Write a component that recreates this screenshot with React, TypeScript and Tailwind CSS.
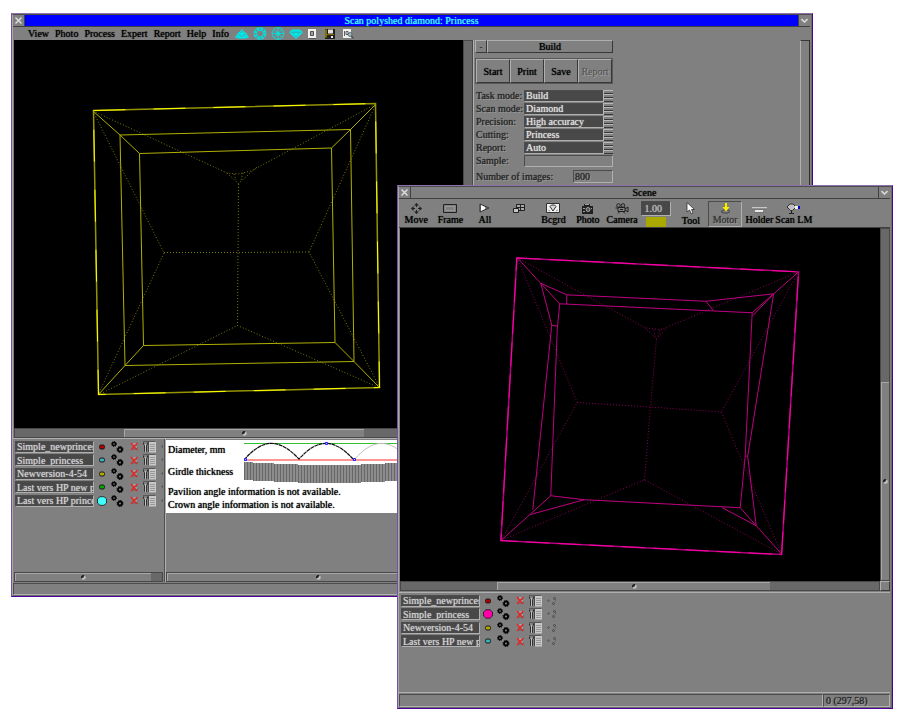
import React, { useState } from 'react';

const inset = 'border border-t-[#4c4c4c] border-l-[#4c4c4c] border-b-[#b0b0b0] border-r-[#b0b0b0]';
const raised = 'border border-t-[#b0b0b0] border-l-[#b0b0b0] border-b-[#383838] border-r-[#383838]';
const heavy = '[text-shadow:0_0_1px_currentColor]';
const emboss = '[text-shadow:0_0_1px_currentColor,1px_1px_0_#a4a4a4]';

type Row = { name: string; color: string; big?: boolean };

const mainRows: Row[] = [
  { name: 'Simple_newprincess', color: '#b00000' },
  { name: 'Simple_princess', color: '#38b0b8' },
  { name: 'Newversion-4-54', color: '#b0a800' },
  { name: 'Last vers HP new princess', color: '#00a800' },
  { name: 'Last vers HP princess', color: '#40ffff', big: true },
];

const sceneRows: Row[] = [
  { name: 'Simple_newprincess', color: '#b00000' },
  { name: 'Simple_princess', color: '#ff00a8', big: true },
  { name: 'Newversion-4-54', color: '#b0a800' },
  { name: 'Last vers HP new princess', color: '#38b0b8' },
];

const settings = [
  { id: 'task', label: 'Task mode:', options: ['Build', 'Scan'] },
  { id: 'scan', label: 'Scan mode:', options: ['Diamond', 'Rough'] },
  { id: 'precision', label: 'Precision:', options: ['High accuracy', 'Normal'] },
  { id: 'cutting', label: 'Cutting:', options: ['Princess', 'Brilliant'] },
  { id: 'report', label: 'Report:', options: ['Auto', 'Manual'] },
];

function Frame({ className, children }: { className: string; children: React.ReactNode }) {
  return (
    <section className={`absolute flex flex-col border border-t-[#8d70ac] border-l-[#7650a8] border-r-[#4b0096] border-b-[#4b0096] bg-[#808080] ${className}`}>
      <div className="flex min-h-0 flex-1 flex-col border border-t-[#4c4c4c] border-l-[#a8a8a8] border-r-[#6c6c6c] border-b-[#6c6c6c] pr-px">
        {children}
      </div>
    </section>
  );
}

function TitleBar({ title, active }: { title: string; active?: boolean }) {
  return (
    <header className="flex h-3 shrink-0 items-stretch border-b border-[#404040]">
      <button aria-label="Close" className="flex w-3 items-center justify-center border-r border-[#404040] bg-[#808080]">
        <svg width="7" height="7" viewBox="0 0 7 7" stroke="#e0e0e0" strokeWidth="1.400" fill="none"><path d="M0.5 0.5l6 6M6.5 0.5l-6 6" /></svg>
      </button>
      <h1 className={`flex flex-1 items-center justify-center leading-3 ${active ? 'bg-[#0000ff] text-[#40ffff]' : 'text-black'}`}>{title}</h1>
      <button aria-label="Collapse" className="flex w-3 items-center justify-center border-l border-[#404040] bg-[#808080]">
        <svg width="7" height="5" viewBox="0 0 7 5" stroke="#d8d8d8" strokeWidth="1.600" fill="none"><path d="M0.5 1l3 3l3-3" /></svg>
      </button>
    </header>
  );
}

function Grip() {
  return (
    <svg width="5" height="5" viewBox="0 0 5 5" className="shrink-0">
      <circle cx="2.500" cy="2.500" r="2.300" fill="#c0c0c0" />
      <path d="M0 3.500V1.500L1.500 0H3.500L2.500 2.500Z" fill="#202020" />
    </svg>
  );
}

// start / thumb / end are relative weights of the track
function ScrollBar({ start, thumb, end, vertical }: { start: number; thumb: number; end: number; vertical?: boolean }) {
  return (
    <div className={`flex shrink-0 border border-[#484848] bg-[#686868] ${vertical ? 'w-[10px] flex-col' : 'h-[10px]'}`}>
      <div style={{ flex: start }} />
      {thumb > 0 && (
        <div className="flex items-center justify-center border-t border-l border-[#a8a8a8] bg-[#808080]" style={{ flex: thumb }}>
          <Grip />
        </div>
      )}
      <div style={{ flex: end }} />
    </div>
  );
}

function Gears() {
  return (
    <svg width="13" height="12" viewBox="0 0 13 12" fill="none" stroke="#000">
      <circle cx="3" cy="3" r="1.600" strokeWidth="1.500" />
      <circle cx="3" cy="3" r="2.500" strokeWidth="1" strokeDasharray="1 0.960" />
      <circle cx="9" cy="8.500" r="2" strokeWidth="1.800" />
      <circle cx="9" cy="8.500" r="3" strokeWidth="1" strokeDasharray="1.200 1.156" />
    </svg>
  );
}

function Cross() {
  return (
    <svg width="9" height="9" viewBox="0 0 9 9" fill="none">
      <path d="M3 1h4v4h1v3H2V6z" fill="#707070" />
      <path d="M3 2h3M3 5h4" stroke="#c8c8c8" />
      <path d="M1 1l6 7M7.500 1l-6.500 7" stroke="#f02020" strokeWidth="1.200" />
    </svg>
  );
}

function ToolSheet() {
  return (
    <svg width="14" height="12" viewBox="0 0 14 12">
      <path d="M0.500 0.500h12" stroke="#303030" strokeDasharray="1 1" />
      <path d="M0.500 1.500v2l1 1v6h2v-6l1-1v-2" fill="none" stroke="#303030" />
      <path d="M2.500 3v8" stroke="#c0c0c0" />
      <rect x="6" y="1" width="7" height="10.500" fill="#c8c8c8" />
      <path d="M7 3.500h5M7 5.500h5M7 7.500h5M7 9.500h5" stroke="#989898" />
      <path d="M5.500 1v10" stroke="#484848" />
    </svg>
  );
}

function Links() {
  return (
    <svg width="11" height="10" viewBox="0 0 11 10" fill="none" stroke="#484848">
      <path d="M0 4.500h3M1.500 3v3" stroke="#606060" />
      <circle cx="7.500" cy="2.500" r="1" />
      <circle cx="6.500" cy="7.500" r="1" />
      <path d="M8.500 3.500v2" stroke="#606060" />
    </svg>
  );
}

function ModelList({ rows, prefix }: { rows: Row[]; prefix: string }) {
  return (
    <ul className="overflow-hidden">
      {rows.map((row, i) => (
        <li key={row.name} className="flex h-[13px] w-[160px] items-center even:h-[14px]">
          <input
            id={`${prefix}-${i}`}
            aria-label={`Model ${i + 1}`}
            defaultValue={row.name}
            className={`h-3 w-[79px] shrink-0 bg-[#484848] pl-px leading-[10px] text-[#d0d0d0] outline-none ${heavy} ${inset}`}
          />
          <button aria-label="Colour" className="flex w-4 shrink-0 items-center justify-center">
            <svg width="10" height="10" viewBox="0 0 10 10">
              {row.big ? (
                <path d="M3 0.700h4L9.500 3v4L7 9.300H3L0.500 7V3z" fill={row.color} stroke="#181818" strokeWidth="0.800" />
              ) : (
                <rect x="2.500" y="3" width="5" height="4" rx="1.500" fill={row.color} stroke="#181818" />
              )}
            </svg>
          </button>
          <button aria-label="Settings" className="ml-px w-[13px] shrink-0"><Gears /></button>
          <button aria-label="Remove" className="ml-[6px] w-[9px] shrink-0"><Cross /></button>
          <button aria-label="Properties" className="ml-1 w-[14px] shrink-0"><ToolSheet /></button>
          <button aria-label="Links" className="ml-1 w-[11px] shrink-0"><Links /></button>
        </li>
      ))}
    </ul>
  );
}

function YellowModel() {
  return (
    <svg className="h-full w-full" viewBox="14 40 449 388" fill="none">
      <g stroke="#7c7c00" strokeDasharray="1 2">
        <path d="M93 111L227 173L238 174L251 171L376 104" />
        <path d="M227 173L238.500 183.500L257 167M234 174l2 6M243 173l-2 7" />
        <path d="M238.500 184L238 253L237.500 325.500M164 252.500L238 252.500L309 252" />
        <path d="M93 111L164 253L98 395L237.500 325.500L380 388L309 252L376 104" />
      </g>
      <g stroke="#b0b000">
        <path d="M120 135L350.500 129.500L354 361.500L125 365.500Z" />
        <path d="M139.500 153.500L331.500 148L335 342.500L143.500 345.500Z" />
        <path d="M93 111L120 135L139.500 153.500M376 104L350.500 129.500L331.500 148M380 388L354 361.500L335 342.500M98 395L125 365.500L143.500 345.500" />
      </g>
      <path d="M93.500 110.500L375.500 103.500L379.500 387.500L98.500 394.500Z" stroke="#949400" strokeWidth="1.500" />
      <path d="M93.500 110.500L375.500 103.500L379.500 387.500L98.500 394.500Z" stroke="#ffff00" strokeDasharray="32 28" />
    </svg>
  );
}

function MagentaModel() {
  return (
    <svg className="h-full w-full" viewBox="400 228 480 354" fill="none">
      <g stroke="#880058" strokeDasharray="1 2">
        <path d="M517 258L645 328L661 330L799 272" />
        <path d="M645 328L656.500 339L668 328M654 330l1 7M660 330l-2 8" />
        <path d="M656.500 339L650.500 407.500L644.500 480.500M577 403L650.500 407.500L721.500 412.500" />
        <path d="M517 258L577 403L501 541L644.500 480.500L782 555L721.500 412.500L799 272" />
      </g>
      <g stroke="#c00082">
        <path d="M517 258L540.500 283.500L566.500 295L706 301.500L774 294L799 272" />
        <path d="M566.500 295V304.500M706 301.500L713.500 310.500" />
        <path d="M540.500 283.500L559.500 304L752.500 313L774 294M753 316L774 294" />
        <path d="M540.500 283.500L551.500 325.500L557.500 326.500M551.500 325.500L532.500 510.500" />
        <path d="M559.500 304L557 330L550.500 496.500L529.500 515.500L501 541" />
        <path d="M529.500 515.500L584 500.500M550.500 496.500L584 500.500L740.500 508.500L756.500 526.500L782 555" />
        <path d="M722.500 508.500L756.500 526.500L748 457L745.500 456.500M774 294L748 457" />
        <path d="M752.500 313L745.500 456.500L740.500 508.500" />
      </g>
      <path d="M516.500 258L799 272L782 555.500L500.500 541.500Z" stroke="#b0007a" strokeWidth="1.500" />
      <path d="M516.500 258L799 272L782 555.500L500.500 541.500Z" stroke="#ff00aa" strokeDasharray="24 8" />
    </svg>
  );
}

function MenuBar() {
  const menus = ['View', 'Photo', 'Process', 'Expert', 'Report', 'Help', 'Info'];
  return (
    <nav className="flex h-[13px] shrink-0 items-center pl-[15px]">
      <div className="flex gap-[6px]">
        {menus.map(menu => (
          <button key={menu} className={`leading-3 text-black ${heavy}`}>{menu}</button>
        ))}
      </div>
      <div className="ml-[6px] flex items-center gap-1" aria-hidden="true">
        <svg width="14" height="10" viewBox="0 0 14 10" fill="#00e8e8"><path d="M0 8.500L3 4L5.500 2L7 0L8.500 2L11 4L14 8.500L10 9.500H4z" /><path d="M2.500 8l2-3l2.500 3l2.500-3l2 3M5 4l2-2l2 2" stroke="#608888" strokeWidth="0.500" fill="none" /></svg>
        <svg width="14" height="13" viewBox="0 0 14 13" fill="none" stroke="#00e0e0"><circle cx="7" cy="6.500" r="4.700" strokeWidth="2.600" strokeDasharray="2.200 1.480" /><circle cx="7" cy="6.500" r="5.900" strokeWidth="0.900" /><circle cx="7" cy="6.500" r="3.400" strokeWidth="0.900" /></svg>
        <svg width="14" height="13" viewBox="0 0 14 13" fill="none" stroke="#00e0e0"><circle cx="7" cy="6.500" r="5.900" /><circle cx="7" cy="6.500" r="1.500" /><path d="M7 1v11M1.500 6.500h11M3 2.500l8 8M11 2.500l-8 8" strokeWidth="0.900" /></svg>
        <svg width="14" height="10" viewBox="0 0 14 10" fill="#00e8e8"><path d="M3 0.500h8L14 3.500L7 10L0 3.500z" /><path d="M1 3.500h12M4 3.500l3 5.500l3-5.500M3 1.500l2 2l2-2l2 2l2-2" stroke="#508888" strokeWidth="0.400" fill="none" /></svg>
      </div>
      <div className="ml-[5px] flex items-center gap-2">
        <button aria-label="New"><svg width="9" height="10" viewBox="0 0 9 10"><path d="M1 1h7v9H1z" fill="#585858" /><path d="M0 0h8v9H0z" fill="#f0f0f0" /><path d="M2.500 2.500h3v4h-3z" fill="#a0a0a0" stroke="#505050" /></svg></button>
        <button aria-label="Save file"><svg width="10" height="10" viewBox="0 0 10 10"><path d="M0 0h10v10H0z" fill="#202020" /><path d="M0 0.500h2v8H0zM2 5h7v1H2z" fill="#807000" /><path d="M3 0.500h5v4H3z" fill="#e0e0e0" /><path d="M6 7h2v2H6z" fill="#f0f0f0" /></svg></button>
        <button aria-label="Preview"><svg width="11" height="10" viewBox="0 0 11 10"><path d="M0 0h8v9H0z" fill="#f0f0f0" /><path d="M1.500 2v5M3 2.500h2v3H3z" stroke="#606060" fill="none" /><circle cx="7" cy="5.500" r="2" fill="#90b8c0" stroke="#505050" strokeWidth="0.700" /><path d="M8.500 7l2 2.500" stroke="#303030" /></svg></button>
      </div>
    </nav>
  );
}

function BuildPanel() {
  const [values, setValues] = useState<Record<string, string>>({});
  return (
    <aside className="flex w-[337px] shrink-0 justify-between border-l border-[#b0b0b0] pl-px">
      <div className="w-[138px]">
        <div className="flex h-[13px]">
          <button aria-label="Fold" className={`flex w-3 items-center justify-center leading-[10px] text-[#303030] ${raised}`}>-</button>
          <h2 className={`flex-1 text-center leading-[11px] text-black ${raised}`}>Build</h2>
        </div>
        <div className="mt-[5px] flex h-[26px] border border-[#585858]">
          {['Start', 'Print', 'Save', 'Report'].map(label => (
            <button
              key={label}
              disabled={label === 'Report'}
              className={`flex-1 text-black disabled:text-[#505050] disabled:[text-shadow:1px_1px_0_#a4a4a4] ${heavy} ${raised}`}
            >
              {label}
            </button>
          ))}
        </div>
        <div className="mt-[5px] flex flex-col pl-px">
          {settings.map(item => (
            <div key={item.id} className="flex h-[13px] items-center">
              <label htmlFor={item.id} className={`w-12 leading-3 text-[#282828] ${emboss}`}>{item.label}</label>
              <div className="relative flex-1">
                <select
                  id={item.id}
                  value={values[item.id] ?? item.options[0]}
                  onChange={(e) => setValues({ ...values, [item.id]: e.target.value })}
                  className={`block h-3 w-full appearance-none bg-[#484848] px-px leading-[10px] text-[#e0e0e0] outline-none ${heavy} ${inset}`}
                >
                  {item.options.map(option => <option key={option}>{option}</option>)}
                </select>
                <svg className="pointer-events-none absolute top-0 right-0" width="10" height="12" viewBox="0 0 10 12">
                  <path d="M0 0h10v12H0z" fill="#808080" />
                  <path d="M0 0.500h10M0 4.500h10M0 8.500h10M0.500 0v12" stroke="#b8b8b8" />
                  <path d="M1 3.500h9M1 7.500h9M1 11.500h9" stroke="#383838" />
                </svg>
              </div>
            </div>
          ))}
          <div className="flex h-[13px] items-center">
            <label htmlFor="sample" className={`w-12 leading-3 text-[#282828] ${emboss}`}>Sample:</label>
            <input id="sample" className={`h-3 min-w-0 flex-1 bg-[#808080] px-px outline-none ${inset}`} />
          </div>
        </div>
        <div className="mt-[3px] flex h-[13px] items-center justify-between pl-px">
          <label htmlFor="images" className={`leading-3 text-[#282828] ${emboss}`}>Number of images:</label>
          <input id="images" defaultValue="800" className={`h-[13px] w-10 bg-[#808080] px-px leading-[10px] text-[#282828] outline-none ${emboss} ${inset}`} />
        </div>
      </div>
      <div className="w-[10px] border border-t-[#383838] border-l-[#b0b0b0] border-r-[#303030] border-b-[#303030]" />
    </aside>
  );
}

function GirdleChart() {
  const bars = Array.from({ length: 100 }, (_, i) => {
    const dip = Math.round(3 * Math.max(0, Math.cos(((i - 28) / 28) * 1.57)));
    return { x: i * 3, y: 21 + dip };
  });
  return (
    <svg width="300" height="44" viewBox="0 0 300 44" fill="none" className="shrink-0">
      <path d="M0 2.500h300" stroke="#30c030" />
      <path d="M0 19h300" stroke="#ff7070" strokeWidth="1.500" />
      <path d="M0 19C19 -3 35 -3 55 18C74 -3 90 -3 110 19" stroke="#101010" strokeWidth="1.200" strokeDasharray="4 0.500" />
      <path d="M110 19C129 -3 145 -3 165 18C184 -3 200 -3 220 19" stroke="#c0c0c0" />
      <path d="M0.500 17.500h2v2h-2zM81.500 1.500h2v2h-2zM109.500 17.500h2v2h-2z" fill="#c0c8ff" stroke="#2020ff" />
      {bars.map(bar => (
        <g key={bar.x}>
          <rect x={bar.x} y={bar.y} width="3" height="18" fill="#8c8c8c" />
          <path d={`M${bar.x + 0.5} ${bar.y}v18`} stroke="#686868" />
        </g>
      ))}
    </svg>
  );
}

function MainWindow() {
  return (
    <Frame className="top-[13px] right-[89px] bottom-[125px] left-[11px]">
      <TitleBar title="Scan polyshed diamond: Princess" active />
      <MenuBar />
      <div className="flex h-[398px] shrink-0 pl-px">
        <div className="flex min-w-0 flex-1 flex-col">
          <div className="flex min-h-0 flex-1">
            <div className="min-w-0 flex-1 bg-black"><YellowModel /></div>
            <ScrollBar vertical start={1} thumb={0} end={0} />
          </div>
          <ScrollBar start={110} thumb={240} end={109} />
        </div>
        <BuildPanel />
      </div>
      <div className="flex min-h-0 flex-1 border-t border-[#b0b0b0] pl-px">
        <div className="flex w-[151px] shrink-0 flex-col justify-between overflow-hidden border-r border-[#505050] pr-px">
          <div className="overflow-hidden pt-px pl-px"><ModelList rows={mainRows} prefix="main" /></div>
          <ScrollBar start={0} thumb={138} end={11} />
        </div>
        <div className="flex min-w-0 flex-1 flex-col justify-between border-l border-[#b0b0b0]">
          <div className="mt-px flex h-[73px] flex-col overflow-hidden bg-white pl-[2px] text-black">
            <div className="flex h-[45px] pt-px">
              <div className="flex w-[76px] shrink-0 flex-col gap-[10px] pt-[3px] leading-3">
                <p>Diameter, mm</p>
                <p>Girdle thickness</p>
              </div>
              <GirdleChart />
            </div>
            <p className="leading-[13px]">Pavilion angle information is not available.</p>
            <p className="leading-[13px]">Crown angle information is not available.</p>
          </div>
          <div className="flex w-[304px] flex-col"><ScrollBar start={0} thumb={1} end={0} /></div>
        </div>
      </div>
      <footer className={`mt-px h-3 shrink-0 ${inset}`} />
    </Frame>
  );
}

const toolIcons: Record<string, React.ReactNode> = {
  Move: <svg width="11" height="11" viewBox="0 0 11 11" fill="#202020"><path d="M5.500 0l2.500 2.500h-5zM5.500 11l2.500-2.500h-5zM0 5.500L2.500 3v5zM11 5.500L8.500 3v5z" /><path d="M5.500 2v2M5.500 7v2M2 5.500h2M7 5.500h2" stroke="#202020" /></svg>,
  Frame: <svg width="14" height="9" viewBox="0 0 14 9" fill="none"><path d="M0.500 0.500h13v8h-13z" stroke="#202020" /><path d="M2.500 2.500h9v4h-9z" stroke="#989898" /></svg>,
  All: <svg width="11" height="10" viewBox="0 0 11 10"><path d="M1 1L10 5L1 9z" fill="#808080" stroke="#303030" /><path d="M2 2l4 2v2L2 8z" fill="#fff" /></svg>,
  Views: <svg width="12" height="11" viewBox="0 0 12 11" fill="#a8a8a8" stroke="#202020"><path d="M3.500 1.500h8v6h-8zM7.500 1.500v6M3.500 4.500h8" /><path d="M0.500 5.500h5v4h-5z" fill="#c8c8c8" /></svg>,
  Bcgrd: <svg width="14" height="10" viewBox="0 0 14 10"><path d="M0.500 0.500h13v9h-13z" fill="#f0f0f0" stroke="#303030" /><path d="M5.500 2h3l1.500 1.500L7 8L4 3.500z" fill="#d8d8d8" stroke="#202020" strokeWidth="0.900" /><path d="M2 7l2 1M10 8l2-1" stroke="#909090" /></svg>,
  Photo: <svg width="13" height="11" viewBox="0 0 13 11"><path d="M1 3h2V1h6v2h3v8H1z" fill="#202020" /><path d="M2 5.500h2M10 5.500h1M4 1.500h4M2 8.500h2" stroke="#a0a0a0" /><circle cx="7" cy="6.500" r="2" fill="#505050" stroke="#c0c0c0" strokeWidth="0.800" /></svg>,
  Camera: <svg width="14" height="11" viewBox="0 0 14 11" fill="#808080" stroke="#202020"><circle cx="3.500" cy="2.500" r="1.800" /><circle cx="8" cy="2.500" r="1.800" /><path d="M3 4.500h7v4H3zM10 6l3-2v5l-3-2M0.500 5h2M5 8.500l-2 2M8 8.500l2 2" /><path d="M5 6.500h3" stroke="#202020" /></svg>,
  Tool: <svg width="10" height="13" viewBox="0 0 10 13"><path d="M1 0.500V10L3.500 8L5.500 12L7 11L5.500 7.500H8.500z" fill="#fff" stroke="#303030" strokeWidth="0.800" /></svg>,
  Motor: <svg width="11" height="12" viewBox="0 0 11 12"><path d="M1 9.500L4 8h4l2 1.500L8 11H3z" fill="none" stroke="#404040" /><path d="M5 1h2v4h2.500L6 9.500L2.500 5H5z" fill="#f8f000" /><path d="M4.500 1v4" stroke="#908800" strokeWidth="0.600" /></svg>,
  Holder: <svg width="15" height="9" viewBox="0 0 15 9"><path d="M0 3h15v1.500H0z" fill="#c8c8c8" /><path d="M3 6h8v2H3z" fill="#e8e8e8" /><path d="M0 5h15M3 8.500h9" stroke="#686868" strokeWidth="0.700" /></svg>,
  'Scan LM': <svg width="17" height="11" viewBox="0 0 17 11"><path d="M5 1h3L11 4L7.500 7.500h-2L2 4z" fill="#c0c0c0" stroke="#303030" /><path d="M6.500 8v2M4 10.500h5" stroke="#202020" /><path d="M10 3h3v3h-3z" fill="#f0f0f0" /><path d="M13 3h2v3h-2z" fill="#0000d0" /></svg>,
};

function ToolButton({ name, pressed }: { name: string; pressed?: boolean }) {
  return (
    <button
      aria-label={name}
      aria-pressed={pressed}
      className={`flex h-[26px] flex-col items-center whitespace-nowrap ${pressed ? `text-[#383838] ${emboss} ${inset}` : `border border-transparent text-black ${heavy}`}`}
    >
      <span className="flex h-[13px] items-center justify-center">{toolIcons[name]}</span>
      <span className="leading-3">{name === 'Views' ? '' : name}</span>
    </button>
  );
}

function SceneWindow() {
  return (
    <Frame className="top-[185px] right-[9px] bottom-[13px] left-[397px]">
      <TitleBar title="Scene" />
      <div className="flex h-[29px] shrink-0 items-end border-b border-[#404040]">
        <div className="grid w-[412px] grid-cols-12">
          {['Move', 'Frame', 'All', 'Views', 'Bcgrd', 'Photo', 'Camera'].map(name => <ToolButton key={name} name={name} />)}
          <div className="flex h-[26px] flex-col items-center">
            <input aria-label="Zoom" defaultValue="1.00" className={`h-[15px] w-[30px] shrink-0 bg-[#484848] px-[2px] text-[#b8b8b8] outline-none ${heavy} ${inset}`} />
            <button aria-label="Background colour" className="mt-px h-[10px] w-5 bg-[#a8a800]" />
          </div>
          <ToolButton name="Tool" />
          <ToolButton name="Motor" pressed />
          <ToolButton name="Holder" />
          <ToolButton name="Scan LM" />
        </div>
      </div>
      <div className="flex min-h-0 flex-1 pl-px">
        <div className="min-w-0 flex-1 bg-black"><MagentaModel /></div>
        <ScrollBar vertical start={154} thumb={199} end={0} />
      </div>
      <div className="flex pl-px">
        <div className="flex min-w-0 flex-1 flex-col"><ScrollBar start={96} thumb={274} end={109} /></div>
        <div className={`h-[10px] w-[10px] ${raised}`} />
      </div>
      <div className="mt-px h-[101px] shrink-0 border-t border-b border-t-[#b0b0b0] border-b-[#b0b0b0] pt-px pl-[2px]">
        <ModelList rows={sceneRows} prefix="scene" />
      </div>
      <footer className="mt-px flex h-[13px] shrink-0">
        <div className={`flex-1 ${inset}`} />
        <output className={`w-[67px] pl-[2px] leading-[11px] text-[#282828] ${emboss} ${inset}`}>0 (297,58)</output>
      </footer>
    </Frame>
  );
}

export default function App() {
  return (
    <main className={`relative h-screen w-full overflow-hidden bg-white font-['Liberation_Serif',serif] text-[10px] font-medium ${heavy}`}>
      <MainWindow />
      <SceneWindow />
    </main>
  );
}
